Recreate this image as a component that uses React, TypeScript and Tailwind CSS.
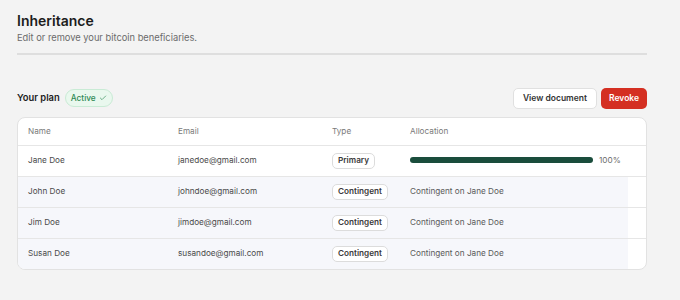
import React from 'react';
import { Check } from 'lucide-react';

const beneficiaries = [
    { name: 'Jane Doe', email: 'janedoe@gmail.com', type: 'Primary', allocation: 100 },
    { name: 'John Doe', email: 'johndoe@gmail.com', type: 'Contingent', note: 'Contingent on Jane Doe' },
    { name: 'Jim Doe', email: 'jimdoe@gmail.com', type: 'Contingent', note: 'Contingent on Jane Doe' },
    { name: 'Susan Doe', email: 'susandoe@gmail.com', type: 'Contingent', note: 'Contingent on Jane Doe' },
];

const cols = 'grid grid-cols-[150px_154px_78px_228px] items-center pl-[10px]';

const TypeBadge: React.FC<{ label: string }> = ({ label }) => (
    <span className="inline-flex h-[16px] items-center rounded-[5px] border border-[#dcdcdc] bg-white px-[5px] text-[8.2px] font-semibold text-[#3a3a3a]">
        {label}
    </span>
);

const App: React.FC = () => {
    return (
        <div
            className="min-h-[300px] w-[680px] bg-[#f3f3f3] px-[17px] pt-[11px]"
            style={{ fontFamily: 'Inter, "Noto Sans", sans-serif' }}
        >
            <h1 className="text-[14px] font-semibold leading-[20px] text-[#1c1c1c]">Inheritance</h1>
            <p className="text-[9.3px] leading-[14px] text-[#6b6b6b]">Edit or remove your bitcoin beneficiaries.</p>
            <div className="mt-[8px] h-[1.5px] w-[630px] bg-[#dedede]" />

            <div className="mt-[33px] flex w-[630px] items-center justify-between">
                <div className="flex items-center gap-[5px]">
                    <span className="text-[9.4px] font-semibold text-[#1c1c1c]">Your plan</span>
                    <span className="inline-flex h-[18px] items-center gap-[3px] rounded-full border border-[#c9ebd5] bg-[#e9f8ee] px-[5px] text-[8.3px] font-medium text-[#2f8a55]">
                        Active
                        <Check className="h-[8px] w-[8px]" strokeWidth={2} />
                    </span>
                </div>
                <div className="flex items-center gap-[4px]">
                    <button className="h-[21px] rounded-[5px] border border-[#e0e0e0] bg-white px-[9px] text-[8.5px] font-semibold text-[#333]">
                        View document
                    </button>
                    <button className="h-[21px] rounded-[5px] bg-[#d42f22] px-[8px] text-[8.5px] font-semibold text-white">
                        Revoke
                    </button>
                </div>
            </div>

            <div className="mt-[8px] w-[630px] overflow-hidden rounded-[8px] border border-[#e2e2e2] bg-white">
                <div className={`${cols} h-[27px] text-[8.2px] text-[#7a7a7a]`}>
                    <span>Name</span>
                    <span>Email</span>
                    <span>Type</span>
                    <span>Allocation</span>
                </div>
                {beneficiaries.map((b, i) => (
                    <div key={b.name} className="border-t border-[#e6e6e6]">
                        <div
                            className={`${cols} h-[30px] w-[610px] text-[8.2px] text-[#4a4a4a] ${i === 0 ? 'bg-white' : 'bg-[#f6f7fb]'}`}
                        >
                            <span>{b.name}</span>
                            <span>{b.email}</span>
                            <span>
                                <TypeBadge label={b.type} />
                            </span>
                            {b.allocation ? (
                                <span className="flex items-center gap-[6px]">
                                    <span className="h-[6px] w-[183px] rounded-full bg-[#1a4d3c]" />
                                    <span className="text-[#6b6b6b]">{b.allocation}%</span>
                                </span>
                            ) : (
                                <span className="text-[#5a5a5a]">{b.note}</span>
                            )}
                        </div>
                    </div>
                ))}
            </div>
        </div>
    );
};

export default App;
